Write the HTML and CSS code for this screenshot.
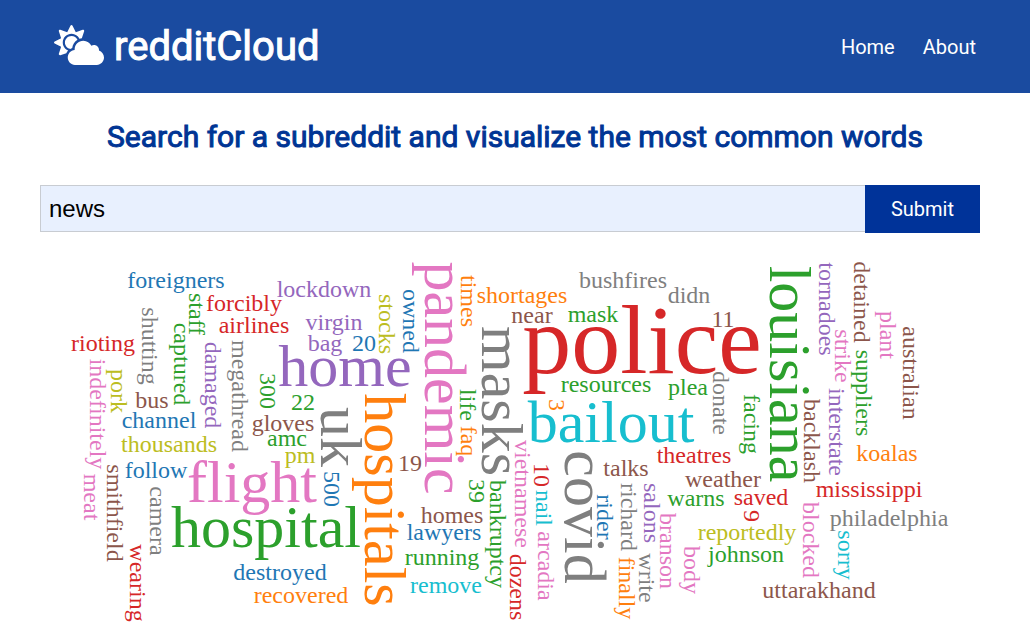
FILE: index.html
```html
<!DOCTYPE html>
<html lang="en">
<head>
<meta charset="utf-8">
<meta name="viewport" content="width=device-width, initial-scale=1">
<title>redditCloud</title>
<link rel="stylesheet" href="styles.css">
</head>
<body>
<header class="topbar">
  <a class="brand" href="#">
    <svg class="brand-icon" viewBox="0 0 640 512" aria-hidden="true"><path fill="currentColor" d="M575.2 325.7c.2-1.9.8-3.7.8-5.6 0-35.3-28.7-64-64-64-12.6 0-24.2 3.8-34.1 10-17.6-38.8-56.5-66-101.9-66-61.8 0-112 50.1-112 112 0 3 .7 5.8.9 8.7-49.6 3.7-88.9 44.7-88.9 95.3 0 53 43 96 96 96h272c53 0 96-43 96-96 0-42.1-27.2-77.4-64.8-90.4zm-430.4-22.6c-43.7-43.7-43.7-114.7 0-158.3 43.7-43.7 114.7-43.7 158.4 0 9.7 9.7 16.9 20.9 22.3 32.7 9.8-3.7 20.1-6 30.7-7.5L386 81.1c4-11.9-7.3-23.1-19.2-19.2L279 91.2 237.5 8.4C232-2.8 216-2.8 210.4 8.4L169 91.2 81.1 61.9C69.3 58 58 69.3 61.9 81.1l29.3 87.8-82.8 41.5c-11.2 5.6-11.2 21.5 0 27.1l82.8 41.4-29.3 87.8c-4 11.9 7.3 23.1 19.2 19.2l76.1-25.3c6.1-12.4 14-23.7 23.6-33.5-13.1-5.4-25.4-13.4-36-24zm-4.8-79.2c0 40.8 29.3 74.8 67.9 82.3 8-4.7 16.3-8.8 25.2-11.7 5.4-44.3 31-82.5 67.4-105C287.3 160.4 258 140 224 140c-46.3 0-84 37.6-84 83.9z"/></svg>
    <span class="brand-name">redditCloud</span>
  </a>
  <nav class="nav">
    <a href="#">Home</a>
    <a href="#">About</a>
  </nav>
</header>
<main class="content">
  <h1 class="title">Search for a subreddit and visualize the most common words</h1>
  <form class="search">
    <input class="search-input" type="text" value="news" aria-label="Subreddit">
    <button class="search-button" type="submit">Submit</button>
  </form>
  <svg class="cloud" viewBox="40 240 940 400" role="img" aria-label="Most common words">
    <text class="xl red" x="642" y="373">police</text>
    <text class="lg purple" x="345" y="386">home</text>
    <text class="lg pink" x="252" y="502">flight</text>
    <text class="lg green" x="266" y="547">hospital</text>
    <text class="lg cyan" x="611" y="442">bailout</text>
    <text class="lg pink" transform="translate(425 378) rotate(90)">pandemic</text>
    <text class="lg gray" transform="translate(321 437) rotate(90)">uk</text>
    <text class="lg orange" transform="translate(365 500) rotate(90)">hospitals</text>
    <text class="lg gray" transform="translate(482 401) rotate(90)">masks</text>
    <text class="lg gray" transform="translate(565 517) rotate(90)">covid</text>
    <text class="lg green" transform="translate(770 374) rotate(90)">louisiana</text>

    <text class="blue" x="176" y="288">foreigners</text>
    <text class="red" x="244" y="311">forcibly</text>
    <text class="red" x="254" y="333">airlines</text>
    <text class="red" x="103" y="351">rioting</text>
    <text class="brown" x="152" y="408">bus</text>
    <text class="blue" x="159" y="428">channel</text>
    <text class="olive" x="169" y="452">thousands</text>
    <text class="blue" x="156" y="478">follow</text>
    <text class="purple" x="324" y="297">lockdown</text>
    <text class="purple" x="334" y="330">virgin</text>
    <text class="purple" x="325" y="351">bag</text>
    <text class="blue" x="364" y="351">20</text>
    <text class="green" x="303" y="410">22</text>
    <text class="brown" x="283" y="431">gloves</text>
    <text class="green" x="287" y="446">amc</text>
    <text class="olive" x="300" y="463">pm</text>
    <text class="blue" x="280" y="580">destroyed</text>
    <text class="orange" x="301" y="603">recovered</text>
    <text class="brown" x="410" y="471">19</text>
    <text class="brown" x="452" y="523">homes</text>
    <text class="blue" x="444" y="540">lawyers</text>
    <text class="green" x="442" y="565">running</text>
    <text class="cyan" x="446" y="593">remove</text>
    <text class="orange" x="522" y="303">shortages</text>
    <text class="brown" x="532" y="323">near</text>
    <text class="green" x="593" y="322">mask</text>
    <text class="gray" x="623" y="288">bushfires</text>
    <text class="gray" x="689" y="303">didn</text>
    <text class="brown" x="723" y="327">11</text>
    <text class="green" x="606" y="392">resources</text>
    <text class="green" x="688" y="395">plea</text>
    <text class="red" x="694" y="463">theatres</text>
    <text class="brown" x="723" y="487">weather</text>
    <text class="green" x="696" y="506">warns</text>
    <text class="red" x="761" y="505">saved</text>
    <text class="olive" x="747" y="540">reportedly</text>
    <text class="green" x="746" y="562">johnson</text>
    <text class="brown" x="626" y="476">talks</text>
    <text class="orange" x="887" y="461">koalas</text>
    <text class="red" x="869" y="497">mississippi</text>
    <text class="gray" x="889" y="526">philadelphia</text>
    <text class="brown" x="819" y="598">uttarakhand</text>

    <text class="green" transform="translate(189 314) rotate(90)">staff</text>
    <text class="gray" transform="translate(142 346) rotate(90)">shutting</text>
    <text class="green" transform="translate(174 364) rotate(90)">captured</text>
    <text class="purple" transform="translate(205 385) rotate(90)">damaged</text>
    <text class="gray" transform="translate(232 396) rotate(90)">megathread</text>
    <text class="pink" transform="translate(90 414) rotate(90)">indefinitely</text>
    <text class="olive" transform="translate(111 391) rotate(90)">pork</text>
    <text class="pink" transform="translate(84 497) rotate(90)">meat</text>
    <text class="brown" transform="translate(107 513) rotate(90)">smithfield</text>
    <text class="gray" transform="translate(150 521) rotate(90)">camera</text>
    <text class="red" transform="translate(130 583) rotate(90)">wearing</text>
    <text class="olive" transform="translate(379 324) rotate(90)">stocks</text>
    <text class="blue" transform="translate(403 321) rotate(90)">owned</text>
    <text class="green" transform="translate(260 391) rotate(90)">300</text>
    <text class="blue" transform="translate(324 489) rotate(90)">500</text>
    <text class="orange" transform="translate(461 301) rotate(90)">times</text>
    <text class="green" transform="translate(460 405) rotate(90)">life</text>
    <text class="orange" transform="translate(461 441) rotate(90)">faq</text>
    <text class="green" transform="translate(469 491) rotate(90)">39</text>
    <text class="green" transform="translate(490 534) rotate(90)">bankruptcy</text>
    <text class="pink" transform="translate(515 494) rotate(90)">vietnamese</text>
    <text class="red" transform="translate(534 475) rotate(90)">10</text>
    <text class="cyan" transform="translate(536 508) rotate(90)">nail</text>
    <text class="pink" transform="translate(538 566) rotate(90)">arcadia</text>
    <text class="red" transform="translate(510 587) rotate(90)">dozens</text>
    <text class="blue" transform="translate(597 517) rotate(90)">rider</text>
    <text class="gray" transform="translate(621 517) rotate(90)">richard</text>
    <text class="orange" transform="translate(619 588) rotate(90)">finally</text>
    <text class="purple" transform="translate(644 513) rotate(90)">salons</text>
    <text class="gray" transform="translate(639 578) rotate(90)">write</text>
    <text class="pink" transform="translate(660 551) rotate(90)">branson</text>
    <text class="pink" transform="translate(684 570) rotate(90)">body</text>
    <text class="orange" transform="translate(549 405) rotate(90)">3</text>
    <text class="gray" transform="translate(713 403) rotate(90)">donate</text>
    <text class="green" transform="translate(744 424) rotate(90)">facing</text>
    <text class="purple" transform="translate(819 309) rotate(90)">tornadoes</text>
    <text class="brown" transform="translate(854 302) rotate(90)">detained</text>
    <text class="pink" transform="translate(835 356) rotate(90)">strike</text>
    <text class="pink" transform="translate(880 335) rotate(90)">plant</text>
    <text class="green" transform="translate(856 393) rotate(90)">suppliers</text>
    <text class="brown" transform="translate(903 373) rotate(90)">australian</text>
    <text class="brown" transform="translate(804 441) rotate(90)">backlash</text>
    <text class="purple" transform="translate(829 432) rotate(90)">interstate</text>
    <text class="red" transform="translate(744 516) rotate(90)">9</text>
    <text class="pink" transform="translate(803 540) rotate(90)">blocked</text>
    <text class="cyan" transform="translate(838 555) rotate(90)">sorry</text>
  </svg>
</main>
</body>
</html>
```
FILE: styles.css
```css
* {
  box-sizing: border-box;
}

body {
  margin: 0;
  background: #fff;
  font-family: Roboto, sans-serif;
}

.topbar {
  display: flex;
  align-items: center;
  justify-content: space-between;
  padding: 21px 54px 20px;
  background: #1a4ba0;
  color: #fff;
}

.brand {
  display: flex;
  align-items: flex-start;
  gap: 10px;
  color: inherit;
  font-size: 40px;
  line-height: 52px;
  text-decoration: none;
}

.brand-icon {
  width: 50px;
  height: 40px;
  margin-top: 4px;
}

.brand-name {
  -webkit-text-stroke: 1px currentColor;
}

.nav {
  display: flex;
  gap: 28px;
  font-size: 20px;
  line-height: 24px;
}

.nav a {
  color: inherit;
  text-decoration: none;
}

.content {
  padding: 24px 50px 0 40px;
}

.title {
  margin: 0 -10px 28px 0;
  color: #003594;
  font-size: 30px;
  font-weight: 400;
  line-height: 40px;
  text-align: center;
  -webkit-text-stroke: 1px currentColor;
}

.search {
  display: flex;
  align-items: flex-start;
  margin-bottom: 7px;
}

.search-input {
  flex: 1;
  min-width: 0;
  height: 47px;
  padding: 0 8px;
  border: 1px solid #c8ccd2;
  border-right: 0;
  border-radius: 0;
  background: #e8f0fe;
  color: #000;
  font: 24px "Liberation Sans", Arial, sans-serif;
}

.search-button {
  width: 115px;
  height: 48px;
  padding: 0;
  border: 0;
  background: #003399;
  color: #fff;
  font: 20px Roboto, sans-serif;
}

.cloud {
  display: block;
  width: 100%;
  font-family: "Liberation Serif", "Times New Roman", serif;
  font-size: 24px;
  text-anchor: middle;
}

.lg { font-size: 60px; }
.xl { font-size: 98px; }

.blue { fill: #1f77b4; }
.orange { fill: #ff7f0e; }
.green { fill: #2ca02c; }
.red { fill: #d62728; }
.purple { fill: #9467bd; }
.brown { fill: #8c564b; }
.pink { fill: #e377c2; }
.gray { fill: #7f7f7f; }
.olive { fill: #bcbd22; }
.cyan { fill: #17becf; }
```
